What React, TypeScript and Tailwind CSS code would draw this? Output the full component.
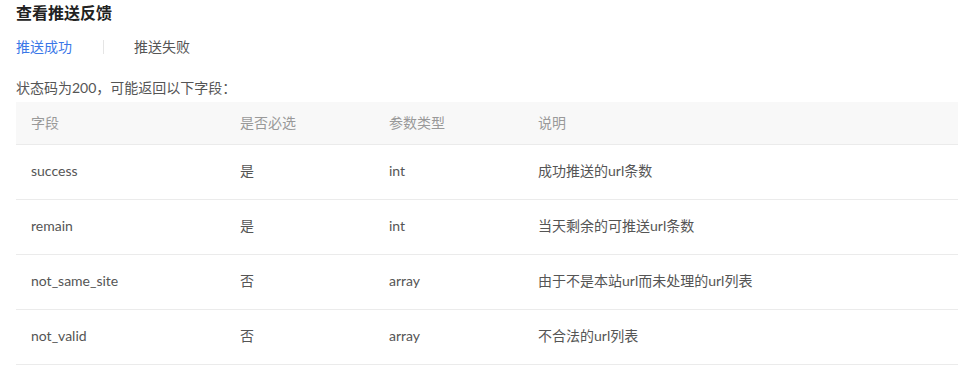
const rows = [
  { name: 'success', req: '是', type: 'int', desc: '成功推送的url条数' },
  { name: 'remain', req: '是', type: 'int', desc: '当天剩余的可推送url条数' },
  { name: 'not_same_site', req: '否', type: 'array', desc: '由于不是本站url而未处理的url列表' },
  { name: 'not_valid', req: '否', type: 'array', desc: '不合法的url列表' },
];

const font = { fontFamily: 'Lato, "Noto Sans CJK SC", sans-serif' };

export default function App() {
  return (
    <div className="min-h-screen bg-white pl-[16px] text-[14px]" style={font}>
      <h3 className="h-[26px] text-[16px] leading-[26px] font-bold text-[#222]">查看推送反馈</h3>

      <div className="mt-[11px] flex h-[20px] items-center leading-[20px]">
        <span className="text-[#3a77e8]">推送成功</span>
        <span className="ml-[31px] h-[14px] w-px bg-[#e5e5e5]" />
        <span className="ml-[30px] text-[#555]">推送失败</span>
      </div>

      <p className="mt-[21px] h-[20px] leading-[20px] text-[#555]">状态码为200，可能返回以下字段：</p>

      <table className="mt-[4px] w-full border-collapse text-left">
        <thead>
          <tr className="h-[42px] bg-[#f8f8f8] text-[#999]">
            <th className="w-[209px] px-[15px] font-normal">字段</th>
            <th className="w-[149px] px-[15px] font-normal">是否必选</th>
            <th className="w-[149px] px-[15px] font-normal">参数类型</th>
            <th className="px-[15px] font-normal">说明</th>
          </tr>
        </thead>
        <tbody className="text-[#555]">
          {rows.map((r) => (
            <tr key={r.name} className="h-[55px] border-t border-b border-[#ebebeb]">
              <td className="px-[15px] pb-[2px]">{r.name}</td>
              <td className="px-[15px] pb-[2px]">{r.req}</td>
              <td className="px-[15px] pb-[2px]">{r.type}</td>
              <td className="px-[15px] pb-[2px]">{r.desc}</td>
            </tr>
          ))}
        </tbody>
      </table>
    </div>
  );
}
